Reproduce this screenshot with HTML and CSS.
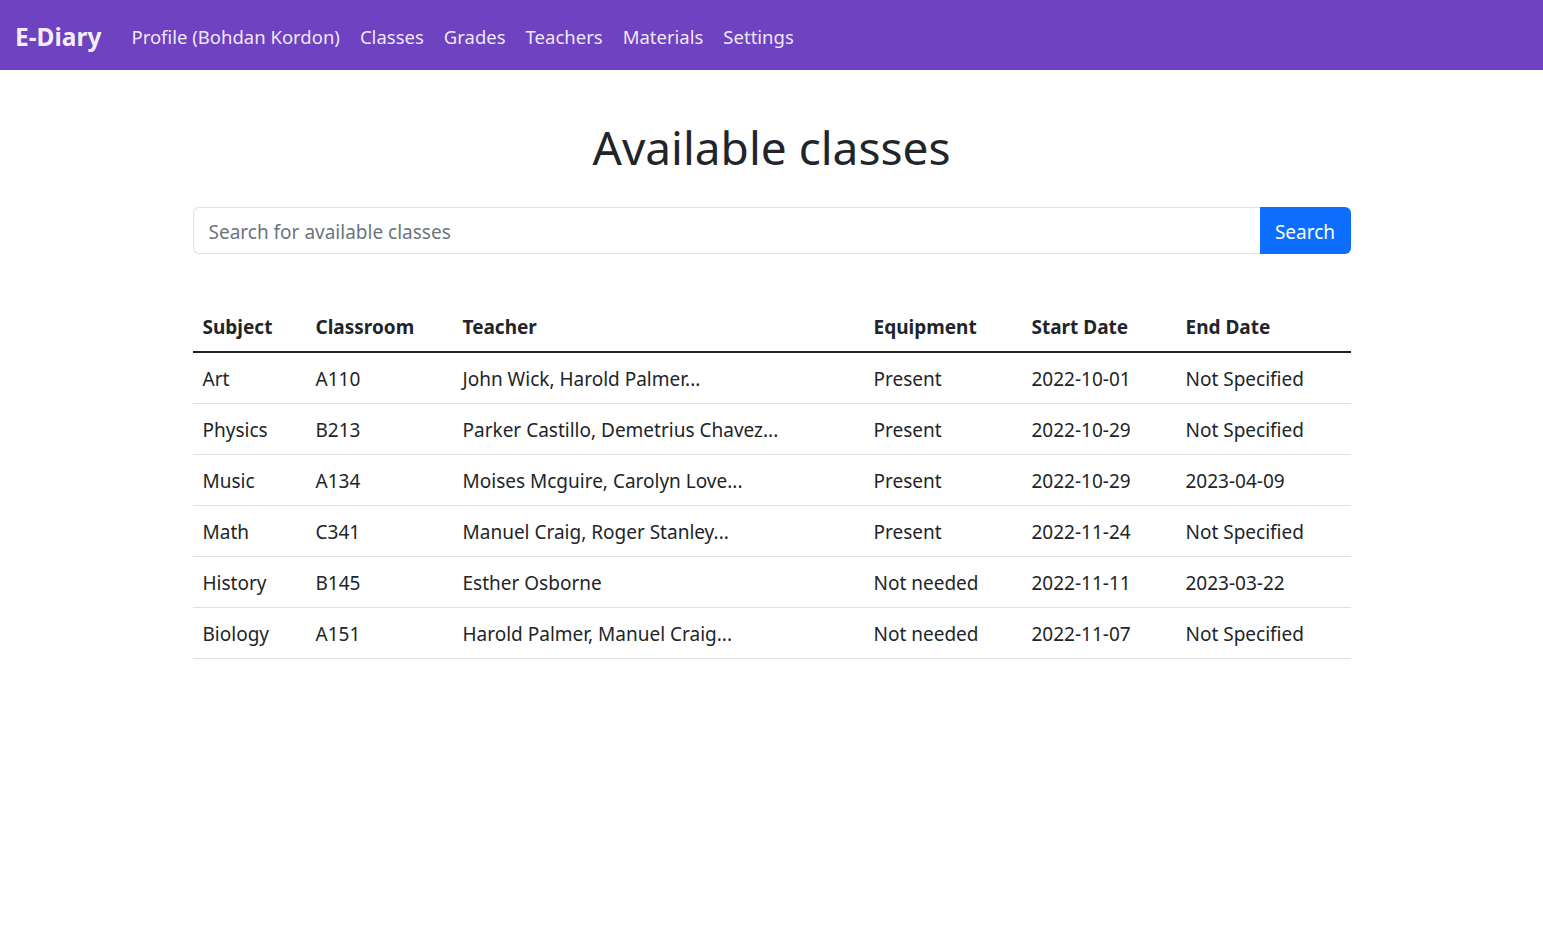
FILE: index.html
```html
<!DOCTYPE html>
<html lang="en">
<head>
<meta charset="utf-8">
<title>E-Diary</title>
<link rel="stylesheet" href="styles.css">
</head>
<body>
<nav class="navbar">
  <a class="brand" href="#">E-Diary</a>
  <ul class="nav-links">
    <li><a href="#">Profile (Bohdan Kordon)</a></li>
    <li><a href="#">Classes</a></li>
    <li><a href="#">Grades</a></li>
    <li><a href="#">Teachers</a></li>
    <li><a href="#">Materials</a></li>
    <li><a href="#">Settings</a></li>
  </ul>
</nav>
<main class="container">
  <h1 class="title">Available classes</h1>
  <form class="search-group">
    <input class="search-input" type="text" placeholder="Search for available classes">
    <button class="search-btn" type="button">Search</button>
  </form>
  <table class="classes">
    <colgroup>
      <col class="c1"><col class="c2"><col class="c3"><col class="c4"><col class="c5"><col class="c6">
    </colgroup>
    <thead>
      <tr><th>Subject</th><th>Classroom</th><th>Teacher</th><th>Equipment</th><th>Start Date</th><th>End Date</th></tr>
    </thead>
    <tbody>
      <tr><td>Art</td><td>A110</td><td>John Wick, Harold Palmer...</td><td>Present</td><td>2022-10-01</td><td>Not Specified</td></tr>
      <tr><td>Physics</td><td>B213</td><td>Parker Castillo, Demetrius Chavez...</td><td>Present</td><td>2022-10-29</td><td>Not Specified</td></tr>
      <tr><td>Music</td><td>A134</td><td>Moises Mcguire, Carolyn Love...</td><td>Present</td><td>2022-10-29</td><td>2023-04-09</td></tr>
      <tr><td>Math</td><td>C341</td><td>Manuel Craig, Roger Stanley...</td><td>Present</td><td>2022-11-24</td><td>Not Specified</td></tr>
      <tr><td>History</td><td>B145</td><td>Esther Osborne</td><td>Not needed</td><td>2022-11-11</td><td>2023-03-22</td></tr>
      <tr><td>Biology</td><td>A151</td><td>Harold Palmer, Manuel Craig...</td><td>Not needed</td><td>2022-11-07</td><td>Not Specified</td></tr>
    </tbody>
  </table>
</main>
</body>
</html>
```
FILE: styles.css
```css
* { box-sizing: border-box; }
body {
  margin: 0;
  font-family: "Noto Sans", "Open Sans", sans-serif;
  font-size: 19px;
  line-height: 30px;
  color: #212529;
  background: #fff;
}
a { text-decoration: none; }

.navbar {
  display: flex;
  align-items: center;
  height: 70px;
  padding: 3px 15px 0;
  background: #6f42c1;
}
.brand {
  font-size: 24.5px;
  font-weight: 700;
  color: rgba(255,255,255,0.92);
  margin-right: 20px;
  line-height: 36px;
}
.nav-links {
  display: flex;
  list-style: none;
  margin: 0;
  padding: 0;
}
.nav-links a {
  display: block;
  padding: 0 10px;
  color: rgba(255,255,255,0.9);
  font-size: 18.5px;
  line-height: 30px;
}

.container {
  width: 1158px;
  margin: 0 auto;
}
.title {
  margin: 50px 0 0;
  font-size: 46px;
  line-height: 55px;
  font-weight: 400;
  text-align: center;
}
.search-group {
  display: flex;
  margin: 32px 0 0;
  height: 47px;
}
.search-input {
  flex: 1;
  min-width: 0;
  height: 47px;
  padding: 2px 15px 0;
  border: 1px solid #dee2e6;
  border-right: none;
  border-radius: 6px 0 0 6px;
  font-family: inherit;
  font-size: 19px;
  color: #212529;
  outline: none;
}
.search-input::placeholder { color: #6c757d; }
.search-btn {
  width: 91px;
  height: 47px;
  border: none;
  border-radius: 0 6px 6px 0;
  background: #0d6efd;
  color: #fff;
  font-family: inherit;
  font-size: 19px;
  padding: 2px 0 0;
  cursor: pointer;
}

.classes {
  width: 100%;
  margin-top: 48px;
  border-collapse: collapse;
  table-layout: fixed;
}
.c1 { width: 113px; }
.c2 { width: 147px; }
.c3 { width: 411px; }
.c4 { width: 158px; }
.c5 { width: 154px; }
.c6 { width: 175px; }
.classes th, .classes td {
  text-align: left;
  padding: 11px 10px 9px;
  line-height: 30px;
  border-bottom: 1px solid #dee2e6;
  white-space: nowrap;
}
.classes th {
  font-weight: 700;
  border-bottom: 2px solid #212529;
  padding-top: 10px;
  padding-bottom: 9px;
}
```
